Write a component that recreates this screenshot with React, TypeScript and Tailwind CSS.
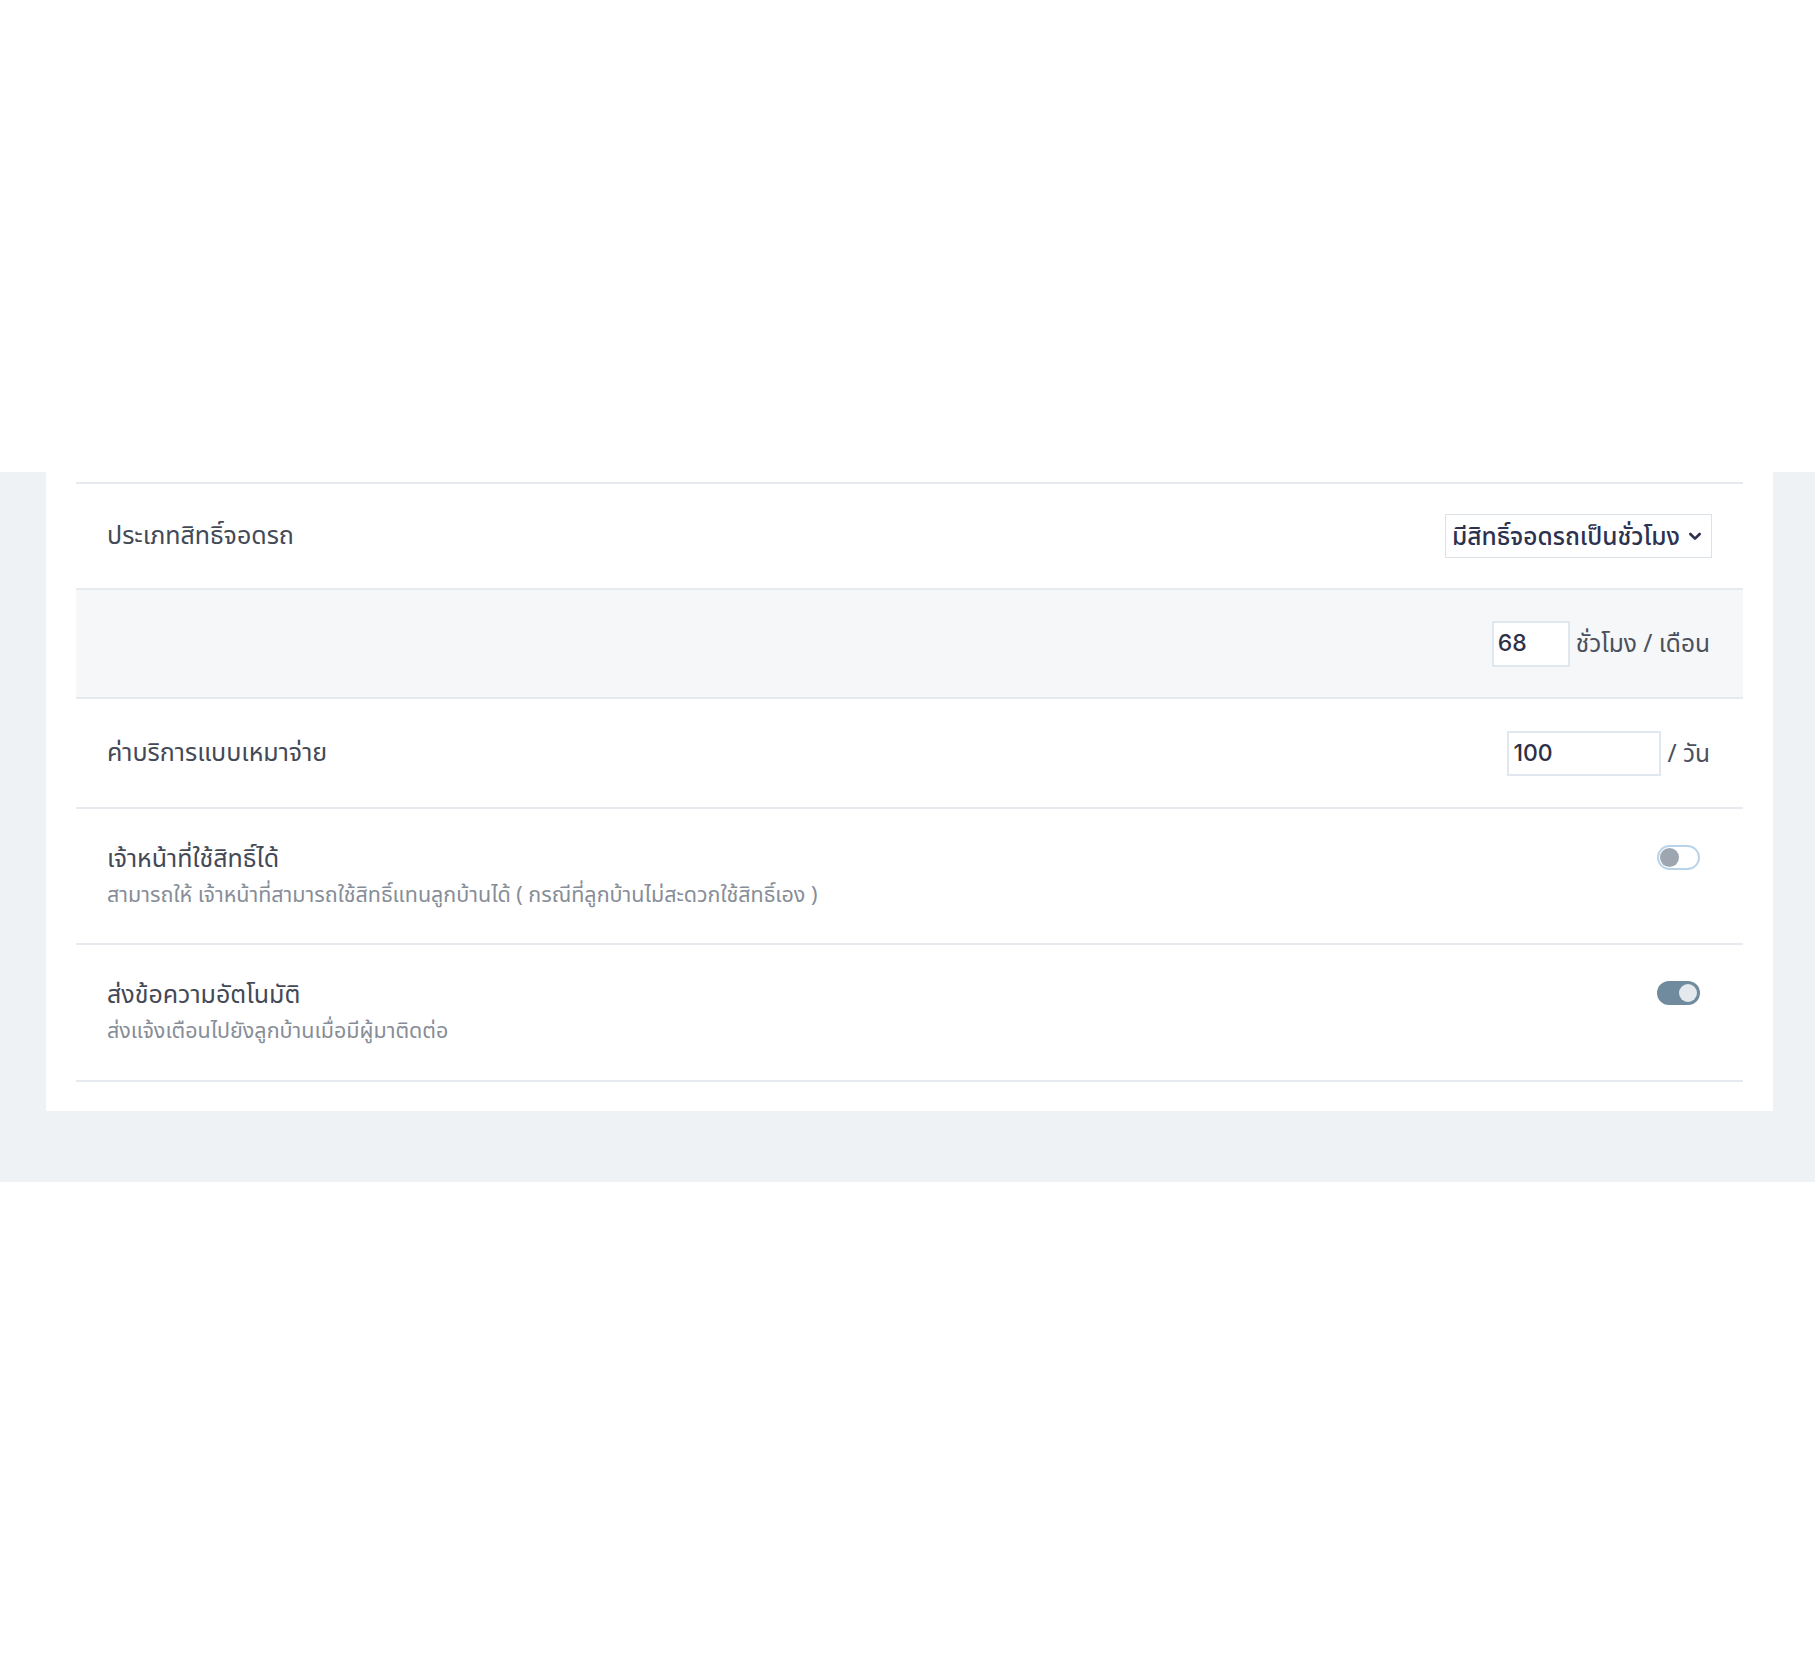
import React from "react";

function Toggle({ on }: { on: boolean }) {
  return on ? (
    <div className="w-[43px] h-[24px] rounded-full bg-[#6f8b9d] flex items-center justify-end px-[3px]">
      <div className="w-[18px] h-[18px] rounded-full bg-[#e4e9ee]" />
    </div>
  ) : (
    <div className="w-[43px] h-[25px] rounded-full bg-white border-2 border-[#b9d4ea] flex items-center justify-start px-[1px]">
      <div className="w-[19px] h-[19px] rounded-full bg-[#9ea7b1]" />
    </div>
  );
}

const font = "font-['Noto_Sans','Noto_Sans_Thai','Loma',sans-serif]";

export default function App() {
  return (
    <div className={`w-[1815px] h-[1654px] bg-white ${font}`}>
      <div className="h-[472px]" />
      <div className="bg-[#eef2f5] h-[710px] pl-[46px] pr-[42px]">
        <div className="bg-white pt-[10px] px-[30px] pb-[29px]">
          {/* Row 1 */}
          <div className="border-t-2 border-[#e6eaee] h-[106px] flex items-center justify-between pl-[31px] pr-[31px]">
            <span className="text-[25px] leading-[30px] text-[#434956] -mt-[4px]">ประเภทสิทธิ์จอดรถ</span>
            <div className="h-[44px] border border-[#dbe2ea] flex items-center pl-[6px] pr-[8px]">
              <span className="text-[24.5px] font-medium text-[#2d3250] whitespace-nowrap">มีสิทธิ์จอดรถเป็นชั่วโมง</span>
              <svg className="ml-[7px]" width="16" height="16" viewBox="0 0 24 24" fill="none" stroke="#2d3250" strokeWidth="4" strokeLinecap="round" strokeLinejoin="round">
                <path d="M5 9l7 7 7-7" />
              </svg>
            </div>
          </div>
          {/* Row 2 */}
          <div className="border-t-2 border-[#e6eaee] bg-[#f5f7f9] h-[109px] flex items-center justify-end pr-[33px]">
            <div className="w-[78px] h-[46px] border-2 border-[#e1e7ee] bg-white flex items-center px-[4px]">
              <span className="text-[23px] font-medium text-[#2d3048] font-['Inter',sans-serif]">68</span>
            </div>
            <span className="ml-[6px] text-[24.5px] text-[#4b505c]">ชั่วโมง / เดือน</span>
          </div>
          {/* Row 3 */}
          <div className="border-t-2 border-[#e6eaee] h-[110px] flex items-center justify-between pl-[31px] pr-[33px]">
            <span className="text-[25px] leading-[30px] text-[#434956] -mt-[4px]">ค่าบริการแบบเหมาจ่าย</span>
            <div className="flex items-center">
              <div className="w-[154px] h-[45px] border-2 border-[#e1e7ee] bg-white flex items-center px-[4px]">
                <span className="text-[23px] font-medium text-[#2d3048] font-['Inter',sans-serif]">100</span>
              </div>
              <span className="ml-[6px] text-[24.5px] text-[#4b505c]">/ วัน</span>
            </div>
          </div>
          {/* Row 4 */}
          <div className="border-t-2 border-[#e6eaee] h-[136px] flex justify-between pl-[31px] pr-[43px] pt-[33px]">
            <div className="flex flex-col">
              <span className="text-[25px] leading-[30px] text-[#434956]">เจ้าหน้าที่ใช้สิทธิ์ได้</span>
              <span className="mt-[9px] text-[21.5px] leading-[26px] text-[#878d97]">สามารถให้ เจ้าหน้าที่สามารถใช้สิทธิ์แทนลูกบ้านได้ ( กรณีที่ลูกบ้านไม่สะดวกใช้สิทธิ์เอง )</span>
            </div>
            <div className="pt-[3px]">
              <Toggle on={false} />
            </div>
          </div>
          {/* Row 5 */}
          <div className="border-t-2 border-b-2 border-[#e6eaee] h-[139px] flex justify-between pl-[31px] pr-[43px] pt-[33px]">
            <div className="flex flex-col">
              <span className="text-[25px] leading-[30px] text-[#434956]">ส่งข้อความอัตโนมัติ</span>
              <span className="mt-[9px] text-[21.5px] leading-[26px] text-[#878d97]">ส่งแจ้งเตือนไปยังลูกบ้านเมื่อมีผู้มาติดต่อ</span>
            </div>
            <div className="pt-[3px]">
              <Toggle on={true} />
            </div>
          </div>
        </div>
      </div>
    </div>
  );
}
